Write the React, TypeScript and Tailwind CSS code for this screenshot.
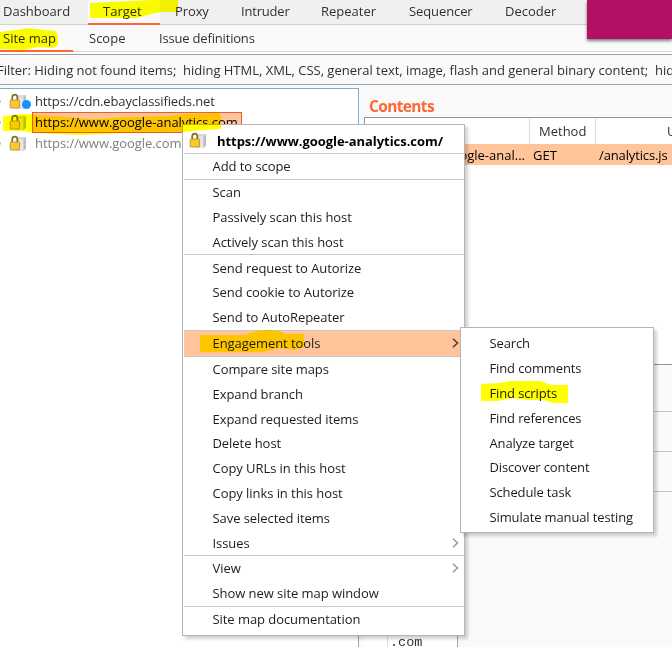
import React from "react";

const font = "font-['Open_Sans','Noto_Sans',sans-serif]";

function LockIcon({ className = "" }: { className?: string }) {
  return (
    <svg width="18" height="18" viewBox="0 0 18 18" className={`shrink-0 ${className}`}>
      <path d="M7 4 10 2h7v11.500L14.500 16H7z" fill="#d8d8d8" />
      <path d="M7 4.500h7.500V16H7z" fill="#e6e6e6" />
      <path d="M14.500 4.500 17 2v11.500L14.500 16z" fill="#bdbdbd" />
      <path d="M3.200 8V4.600a2.600 2.900 0 0 1 5.200 0V8" fill="none" stroke="#8a6d1c" strokeWidth="1.700" />
      <rect x="1.200" y="7" width="9.300" height="8" rx="0.800" fill="#f7ca32" stroke="#b8902c" strokeWidth="0.900" />
    </svg>
  );
}

function Mark({ box, d, className }: { box: string; d: string; className: string }) {
  return (
    <svg viewBox={box} preserveAspectRatio="none" className={`pointer-events-none absolute mix-blend-multiply ${className}`}>
      <path d={d} fill="#ffff00" />
    </svg>
  );
}

function Chevron({ dark = false }: { dark?: boolean }) {
  return (
    <svg width="7" height="10" viewBox="0 0 7 10" className="mr-[5px] ml-auto">
      <path d="M1 .8 5.500 5 1 9.200" fill="none" stroke={dark ? "#4a3a34" : "#999"} strokeWidth="1.500" />
    </svg>
  );
}

function Item({ label, arrow = false }: { label: string; arrow?: boolean }) {
  return (
    <div className="flex h-[24.8px] items-center pl-[28.5px]">
      <span>{label}</span>
      {arrow && <Chevron />}
    </div>
  );
}

function Group({ items }: { items: string[] }) {
  return (
    <div className="border-t border-[#c8c8c8]">
      {items.map((label) => (
        <Item key={label} label={label} arrow={label === "Issues" || label === "View"} />
      ))}
    </div>
  );
}

function ContextMenu() {
  return (
    <div className="absolute top-[124px] left-[182px] h-[512px] w-[283px] border border-[#b5b5b5] bg-white tracking-[-0.06px] text-[#1c1c1c] shadow-[3px_3px_3px_rgba(0,0,0,0.18)]">
      <div className="flex h-[28px] items-center pt-[4px] pl-[6px]">
        <LockIcon />
        <span className="ml-[10px] font-bold tracking-[-0.05px] text-black">https://www.google-analytics.com/</span>
      </div>
      <div className="pl-px">
        <Group items={["Add to scope"]} />
        <Group items={["Scan", "Passively scan this host", "Actively scan this host"]} />
        <Group items={["Send request to Autorize", "Send cookie to Autorize", "Send to AutoRepeater"]} />
        <div className="flex h-[26px] items-center border-t border-[#c8c8c8] bg-[#ffc499] pl-[28.5px]">
          <span>Engagement tools</span>
          <Chevron dark />
        </div>
        <Group
          items={[
            "Compare site maps",
            "Expand branch",
            "Expand requested items",
            "Delete host",
            "Copy URLs in this host",
            "Copy links in this host",
            "Save selected items",
            "Issues",
          ]}
        />
        <Group items={["View", "Show new site map window"]} />
        <Group items={["Site map documentation"]} />
      </div>
    </div>
  );
}

function SubMenu() {
  const items = ["Search", "Find comments", "Find scripts", "Find references", "Analyze target", "Discover content", "Schedule task", "Simulate manual testing"];
  return (
    <div className="absolute top-[327px] left-[460px] h-[206px] w-[194px] border border-[#b5b5b5] bg-white pt-[3px] tracking-[-0.13px] text-[#1c1c1c] shadow-[3px_3px_3px_rgba(0,0,0,0.18)]">
      {items.map((label) => (
        <Item key={label} label={label} />
      ))}
    </div>
  );
}

function TreeDot() {
  return <span className="mr-[6px] size-[3px] -translate-x-[2px] rounded-full bg-[#bbb]" />;
}

export default function App() {
  return (
    <div className={`relative flex h-[651px] w-[672px] flex-col overflow-hidden bg-white text-[13px] leading-[18px] whitespace-nowrap text-[#303030] ${font}`}>
      <nav className="flex h-[25px] shrink-0 border-b border-[#ccd4d2] bg-[#f0f0f0] pl-[3px]">
        <span className="w-[85px] pt-[2px]">Dashboard</span>
        <span className="h-[25px] w-[72px] border-b-2 border-[#ff6633] bg-[#fafafa] pt-[2px] pl-[15px]">Target</span>
        <span className="ml-[15px] w-[66px] pt-[2px] tracking-[-0.1px]">Proxy</span>
        <span className="w-[80px] pt-[2px] tracking-[-0.2px]">Intruder</span>
        <span className="w-[88px] pt-[2px]">Repeater</span>
        <span className="w-[96px] pt-[2px] tracking-[-0.1px]">Sequencer</span>
        <span className="pt-[2px]">Decoder</span>
      </nav>
      <nav className="flex h-[27px] shrink-0 border-b border-[#d6d6d6] bg-[#fafafa]">
        <span className="h-[27px] w-[73px] border-b-2 border-[#ff6633] pt-[4px] pl-[3px]">Site map</span>
        <span className="ml-[16px] w-[70px] pt-[4px]">Scope</span>
        <span className="pt-[4px] tracking-[-0.18px]">Issue definitions</span>
      </nav>
      <div className="mt-[2px] flex h-[31px] shrink-0 items-center overflow-hidden border-y border-[#a0a0a0] bg-[#fafafa]">
        <span className="-ml-[3px] whitespace-pre tracking-[-0.02px]">Filter: Hiding not found items;  hiding HTML, XML, CSS, general text, image, flash and general binary content;  hid</span>
      </div>

      <main className="flex h-[562px] shrink-0 bg-[#fafafa]">
        <section className="mt-[3px] w-[359px] border-t border-r border-[#7fadd9] bg-white pt-[2px]">
          <div className="flex h-[21px] items-center">
            <TreeDot />
            <div className="relative mr-[8px]">
              <LockIcon />
              <span className="absolute top-[7px] left-[13px] size-[9px] rounded-full bg-[#1591ff]" />
            </div>
            <span className="-mt-[2px] tracking-[-0.13px]">https://cdn.ebayclassifieds.net</span>
          </div>
          <div className="flex h-[21px] items-center">
            <TreeDot />
            <LockIcon className="mr-[5px]" />
            <span className="h-[21px] w-[210px] border border-[#ee5a32] bg-[#ffc499] pl-[2px] tracking-[-0.06px] text-black">https://www.google-analytics.com</span>
          </div>
          <div className="flex h-[21px] items-center text-[#808080]">
            <TreeDot />
            <LockIcon className="mr-[8px]" />
            <span className="-mt-[2px] tracking-[-0.06px]">https://www.google.com</span>
          </div>
        </section>
        <section className="ml-[5px] flex w-[308px] flex-col overflow-hidden">
          <h2 className="h-[32px] shrink-0 pt-[11px] pl-[5px] text-[15.500px] leading-[20px] font-bold tracking-[-0.65px] text-[#ff6633]">Contents</h2>
          <div className="h-[247px] shrink-0 border-t border-l border-[#9292a5] bg-white">
            <div className="flex h-[26px] items-center">
              <div className="h-full w-[165px] shrink-0 border-r border-[#ddd]" />
              <div className="h-full w-[66px] shrink-0 border-r border-[#ddd] pt-[4px] pl-[9px]">Method</div>
              <div className="pl-[71px]">URL</div>
            </div>
            <div className="flex h-[21px] items-center bg-[#ffc499] text-black">
              <div className="flex w-[168px] shrink-0 justify-end pr-[8px] pl-[99px]">
                <span>ogle-anal...</span>
              </div>
              <span className="w-[66px] shrink-0">GET</span>
              <span className="tracking-[-0.13px]">/analytics.js</span>
            </div>
          </div>
          <div className="flex grow border-t border-[#9292a5]">
            <div className="flex w-[94px] items-end border-r border-[#aaa2aa] bg-white">
              <div className="h-full w-[24px] border-r border-[#ddd]" />
              <span className="-mb-[3px] pl-[2px] font-['Liberation_Mono',monospace] text-[13.500px] leading-[14px]">.com</span>
            </div>
            <div className="grow pt-[5px]">
              <div className="h-[42px] border-b border-[#c5c5c5]" />
              <div className="h-[40px] border-b border-[#c5c5c5]" />
              <div className="h-[40px] border-b border-[#c5c5c5]" />
            </div>
          </div>
        </section>
      </main>

      <div className="absolute top-0 left-[587px] h-[39px] w-[85px] bg-[#b31064] shadow-[0_2px_3px_rgba(0,0,0,0.5)]" />
      <ContextMenu />
      <SubMenu />
      <Mark className="top-[113px] left-[3px] h-[22px] w-[218px]" box="0 0 218 22" d="M0 3 20 1 50 3 90 6 125 4 165 3 180 1 216 0 218 3V16L200 17 180 19 155 20 120 20 80 22 32 20 20 18 0 18z" />
      <Mark className="top-0 left-[89px] h-[19px] w-[90px]" box="0 0 90 19" d="M1 3 42 1 63 0H89V12H71L62 14 48 18H1z" />
      <Mark className="top-[28px] left-0 h-[22px] w-[58px]" box="0 0 58 22" d="M0 4 16 2 28 0 45 2 56 3 58 8V17L53 20 38 19 24 22 0 21z" />
      <Mark className="top-[330px] left-[200px] h-[22px] w-[104px]" box="0 0 104 22" d="M0 5H45L56 1 68 0 80 1 85 4H104V17L94 20 80 18 62 22H0z" />
      <Mark className="top-[381px] left-[481px] h-[22px] w-[87px]" box="0 0 87 22" d="M0 3 19 2 30 0H60L70 4H87V22H74L62 19H46L31 17 17 20H0z" />
    </div>
  );
}
